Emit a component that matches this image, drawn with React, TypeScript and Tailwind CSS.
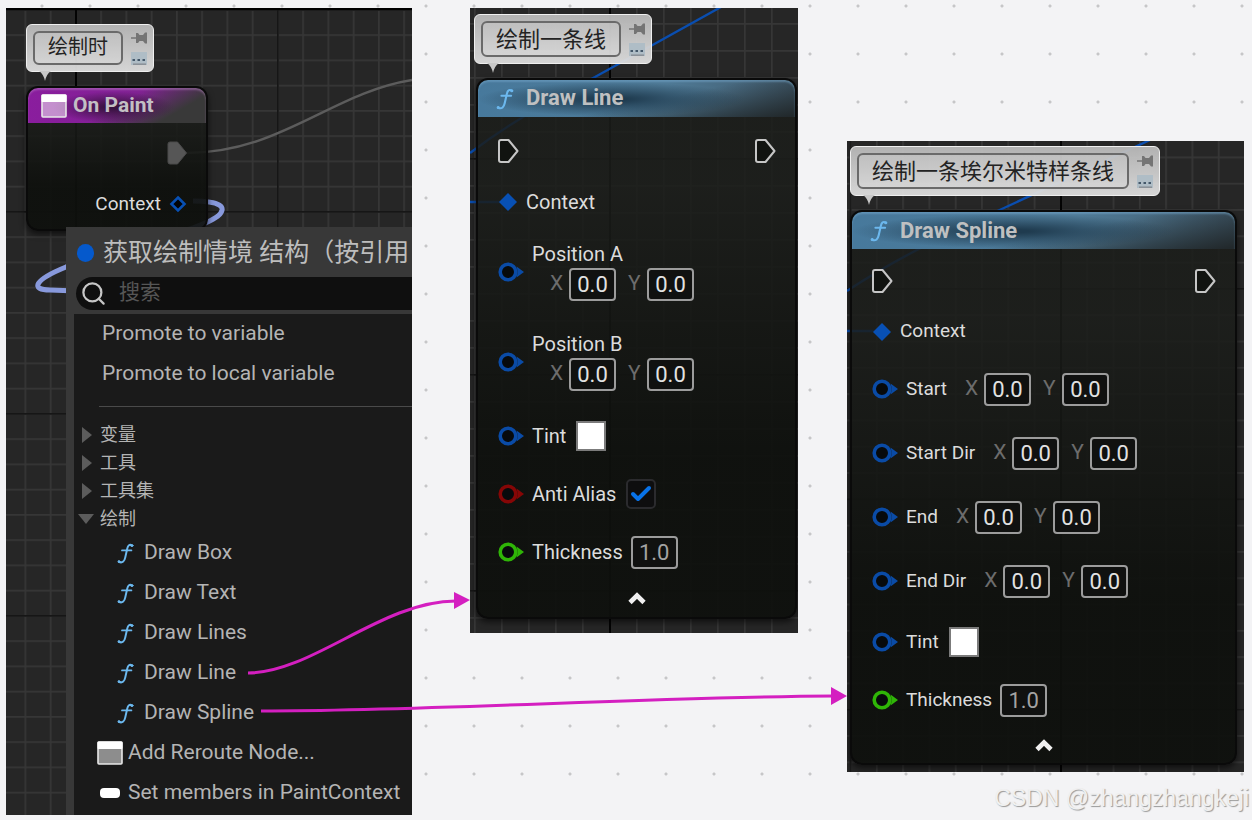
import { useState } from "react";
import type { ReactNode } from "react";
import { Check, ChevronUp, Search } from "lucide-react";
import clsx from "clsx";

interface GridPropsType {
  id: string;
  step: number;
  x: number;
  y: number;
}

const Grid = ({ id, step, x, y }: GridPropsType) => {
  const major = step * 8;

  return (
    <svg className="absolute inset-0 h-full w-full" aria-hidden="true">
      <defs>
        <pattern
          id={`${id}-minor`}
          width={step}
          height={step}
          x={x}
          y={y}
          patternUnits="userSpaceOnUse"
        >
          <path d={`M0 0.8H${step}M0.8 0V${step}`} stroke="#363636" strokeWidth="1.8" />
        </pattern>
        <pattern
          id={`${id}-major`}
          width={major}
          height={major}
          x={x}
          y={y}
          patternUnits="userSpaceOnUse"
        >
          <path d={`M0 0.8H${major}M0.8 0V${major}`} stroke="#161616" strokeWidth="1.8" />
        </pattern>
      </defs>
      <rect width="100%" height="100%" fill="#262626" />
      <rect width="100%" height="100%" fill={`url(#${id}-minor)`} />
      <rect width="100%" height="100%" fill={`url(#${id}-major)`} />
      <rect x={x} y="0" width="2" height="100%" fill="#030303" />
    </svg>
  );
};

const FunctionIcon = ({ className }: { className?: string }) => (
  <svg
    viewBox="0 0 17 21"
    className={clsx("shrink-0", className)}
    fill="none"
    stroke="#6cb8ee"
    strokeLinecap="round"
    aria-hidden="true"
  >
    <path
      d="M15 2.6C12.6 0.8 10.9 2.6 10.3 5.4L8.2 14.6C7.5 18 5.6 20.3 2.2 19"
      strokeWidth="2"
    />
    <path d="M5 7.4H14.4" strokeWidth="1.8" />
    <circle cx="15" cy="2.6" r="1" fill="#6cb8ee" strokeWidth="1" />
    <circle cx="2" cy="18.6" r="1" fill="#6cb8ee" strokeWidth="1" />
  </svg>
);

const WindowIcon = () => (
  <svg viewBox="0 0 26 24" className="h-6 w-[26px] shrink-0" aria-hidden="true">
    <rect x="1" y="1" width="24" height="22" rx="1" fill="#ffffff" fillOpacity="0.5" />
    <rect x="1" y="1" width="24" height="22" rx="1" fill="none" stroke="#e8e8e8" strokeWidth="1.6" />
    <rect x="0.5" y="0.5" width="25" height="7.5" rx="1" fill="#ffffff" />
  </svg>
);

const ExecPin = ({ filled }: { filled?: boolean }) => (
  <svg viewBox="0 0 22 26" className="h-[26px] w-[22px]" aria-hidden="true">
    <path
      d="M4 2H11.5L20.5 13L11.5 24H4Q2 24 2 22V4Q2 2 4 2Z"
      fill={filled ? "#565656" : "#111310"}
      stroke={filled ? "#4a4a4a" : "#c6c6c6"}
      strokeWidth={filled ? 1 : 2}
      strokeLinejoin="round"
    />
  </svg>
);

const DiamondPin = ({ filled }: { filled?: boolean }) => (
  <svg viewBox="0 0 18 18" className="h-[18px] w-[18px]" aria-hidden="true">
    <path
      d={filled ? "M9 0L18 9L9 18L0 9Z" : "M9 2.5L15.5 9L9 15.5L2.5 9Z"}
      fill={filled ? "#0850b4" : "#020408"}
      stroke="#0850b4"
      strokeWidth={filled ? 0 : 2.6}
    />
  </svg>
);

const DataPin = ({ color }: { color: string }) => (
  <svg viewBox="0 0 26 20" className="h-5 w-[26px] shrink-0" aria-hidden="true">
    <path d="M18.5 4.5L26 10L18.5 15.5Q20.5 10 18.5 4.5Z" fill={color} />
    <circle cx="10" cy="10" r="7.8" fill="#070a0c" stroke={color} strokeWidth="3.6" />
  </svg>
);

const CommentBubble = ({ text, large }: { text: string; large?: boolean }) => (
  <div className="relative mb-[14px] flex w-fit items-center gap-2 rounded-md border border-[#efefef] bg-linear-to-b from-[#b9b9b9]/95 to-[#dedede]/95 p-1.5">
    <input
      defaultValue={text}
      aria-label="Comment"
      className={clsx(
        "field-sizing-content rounded-md border-2 border-[#6a6a6a] bg-white/10 px-[13px] pb-[5px] text-[#232323] outline-none",
        large ? "h-9 text-[22px]" : "h-[34px] text-xl",
      )}
    />
    <div className="flex w-4 flex-col items-center gap-2">
      <button type="button" aria-label="Pin comment">
        <svg viewBox="0 0 16 12" className="h-3 w-4" fill="#747474">
          <path d="M0 5.2H5V1H7L8.5 3H12L14 0.5H16V11.5H14L12 9H8.5L7 11H5V6.8H0Z" />
        </svg>
      </button>
      <button type="button" aria-label="Toggle bubble">
        <svg viewBox="0 0 16 13" className="h-[13px] w-4">
          <rect width="16" height="13" fill="#afbdc6" />
          <path d="M1.5 7H4V9H1.5ZM6.5 7H9V9H6.5ZM11.5 7H14V9H11.5Z" fill="#44586a" />
          <path d="M2 12.2H15" stroke="#8b9299" strokeWidth="1.6" />
        </svg>
      </button>
    </div>
    <svg
      viewBox="0 0 12 10"
      className="absolute top-full left-3 h-2.5 w-3"
      aria-hidden="true"
    >
      <path d="M0 0H12Q7.5 3 6 10Q4.500 3 0 0Z" fill="#c8c8c8" />
    </svg>
  </div>
);

const NodeFrame = ({ className, children }: { className: string; children: ReactNode }) => (
  <section
    className={clsx(
      "relative rounded-xl border-2 border-[#0a0a0a] bg-linear-to-b from-[#1b1d1a]/85 from-20% to-[#0e100d]/93 to-70% shadow-[0_3px_6px_rgba(0,0,0,0.6)]",
      className,
    )}
  >
    {children}
  </section>
);

const FunctionHeader = ({ title }: { title: string }) => (
  <header className="flex h-[37px] items-center gap-3 rounded-t-[10px] bg-[radial-gradient(ellipse_42%_46%_at_42%_52%,#1f3b4f_10%,transparent),linear-gradient(168deg,transparent_55%,#22292c_98%),linear-gradient(to_right,#47799c,#4f7a96_60%,#40596a)] pl-[18px] shadow-[inset_0_2px_2px_rgba(120,170,205,0.5)]">
    <FunctionIcon className="h-[22px] w-[18px]" />
    <h2 className="text-[22px] font-bold text-[#bfc0c1]">{title}</h2>
  </header>
);

const NumberBox = ({ label, value, dim }: { label: string; value: string; dim?: boolean }) => (
  <input
    defaultValue={value}
    aria-label={label}
    inputMode="decimal"
    className={clsx(
      "h-[33px] w-[47px] rounded-[4px] border-2 border-[#9c9c9c] bg-[#101110] text-center text-[22px] outline-none",
      dim ? "text-[#a3a3a3]" : "text-[#e2e2e2]",
    )}
  />
);

const VectorInput = ({ name }: { name: string }) => (
  <div className="flex items-center pl-[18px] text-[21px] text-[#6c6c6c]">
    <span className="w-[19px]">X</span>
    <NumberBox label={`${name} X`} value="0.0" />
    <span className="ml-3 w-[19px]">Y</span>
    <NumberBox label={`${name} Y`} value="0.0" />
  </div>
);

const ExecRow = () => (
  <div className="flex h-[51px] items-center justify-between px-[19px]">
    <ExecPin />
    <ExecPin />
  </div>
);

const ContextRow = () => (
  <div className="flex h-[51px] items-center gap-[9px] pl-[21px]">
    <DiamondPin filled />
    <span>Context</span>
  </div>
);

interface PinRowPropsType {
  color?: string;
  className?: string;
  children: ReactNode;
}

const PinRow = ({ color = "#0a4ba6", className = "h-[58px]", children }: PinRowPropsType) => (
  <div className={clsx("flex items-center gap-2 pl-5", className)}>
    <DataPin color={color} />
    {children}
  </div>
);

const TintRow = () => (
  <PinRow>
    <span>Tint</span>
    <button
      type="button"
      aria-label="Tint colour"
      className="ml-0.5 h-[30px] w-[30px] border-2 border-[#7b7b7b] bg-white"
    />
  </PinRow>
);

const ThicknessRow = () => (
  <PinRow color="#2fb507">
    <span>Thickness</span>
    <NumberBox label="Thickness" value="1.0" dim />
  </PinRow>
);

const CollapseButton = ({ className }: { className: string }) => (
  <button
    type="button"
    aria-label="Collapse node"
    className={clsx("flex w-full items-center justify-center text-[#f0f0f0]", className)}
  >
    <ChevronUp size={28} strokeWidth={4} strokeLinecap="butt" strokeLinejoin="miter" />
  </button>
);

const OnPaintNode = () => (
  <NodeFrame className="ml-5 w-[182px] pb-1 text-[19px]">
    <header className="flex h-[35px] items-center gap-1.5 rounded-t-[10px] bg-[radial-gradient(ellipse_34%_45%_at_48%_55%,#38133f_10%,transparent),linear-gradient(150deg,transparent_50%,#393939_80%),linear-gradient(to_right,#8a1d9e,#7b258c)] pl-[13px] shadow-[inset_0_2px_2px_rgba(200,150,210,0.4)]">
      <WindowIcon />
      <h2 className="text-[21px] font-bold text-[#c3bfc4]">On Paint</h2>
    </header>
    <div className="flex h-[60px] items-center justify-end pr-[18px]">
      <ExecPin filled />
    </div>
    <div className="flex h-[42px] items-center justify-end gap-2 pr-[19px] text-[#dcdcdc]">
      <span>Context</span>
      <DiamondPin />
    </div>
  </NodeFrame>
);

const categories = [
  { name: "变量", open: false },
  { name: "工具", open: false },
  { name: "工具集", open: false },
  { name: "绘制", open: true },
];

const drawFunctions = ["Draw Box", "Draw Text", "Draw Lines", "Draw Line", "Draw Spline"];

const ActionMenu = () => {
  const [search, setSearch] = useState("");

  return (
    <div className="relative -mt-1 ml-[60px] flex-1 bg-[#383838] text-[21px] text-[#b4b4b4]">
      <h2 className="flex h-[50px] items-center gap-[9px] overflow-hidden pt-0.5 pl-[11px] text-[25px] whitespace-nowrap text-[#bdbdbd]">
        <span className="h-[18px] w-[17px] shrink-0 rounded-full bg-[#0559cc]" />
        获取绘制情境 结构（按引用
      </h2>
      <label className="ml-2.5 flex h-[33px] items-center gap-3 rounded-l-full bg-[#0f0f0f] pl-1">
        <Search size={27} strokeWidth={2} className="shrink-0 text-[#c6c6c6]" />
        <input
          value={search}
          onChange={(e) => setSearch(e.target.value)}
          placeholder="搜索"
          aria-label="搜索"
          className="w-full min-w-0 bg-transparent pb-0.5 outline-none placeholder:text-[#565656]"
        />
      </label>
      <div className="mt-1 ml-2 bg-[#1a1a1a] pb-0.5">
        <button type="button" className="flex h-10 w-full items-center pl-[28px]">
          Promote to variable
        </button>
        <button type="button" className="flex h-10 w-full items-center pl-[28px]">
          Promote to local variable
        </button>
        <hr className="mt-3 mb-[14px] ml-[25px] border-[#4a4a4a]" />
        {categories.map((category) => (
          <button
            key={category.name}
            type="button"
            aria-expanded={category.open}
            className="flex h-7 w-full items-center gap-1.5 pl-1 text-lg"
          >
            <svg viewBox="0 0 16 16" className="h-4 w-4" fill="#5c5c5c">
              <path d={category.open ? "M0 3H16L8 13Z" : "M4 0L14 8L4 16Z"} />
            </svg>
            {category.name}
          </button>
        ))}
        {drawFunctions.map((name) => (
          <button
            key={name}
            type="button"
            className="flex h-10 w-full items-center gap-2.5 pl-[43px]"
          >
            <FunctionIcon className="h-[21px] w-[17px]" />
            {name}
          </button>
        ))}
        <button type="button" className="flex h-10 w-full items-center gap-[5px] pl-[23px]">
          <WindowIcon />
          Add Reroute Node...
        </button>
        <button type="button" className="flex h-10 w-full items-center gap-2 pl-[26px]">
          <span className="h-2.5 w-5 rounded-[4px] bg-white" />
          Set members in PaintContext
        </button>
      </div>
    </div>
  );
};

const DrawLineNode = () => {
  const [antiAlias, setAntiAlias] = useState(true);

  return (
    <NodeFrame className="ml-1.5 w-[321px] text-xl text-[#dcdcdc]">
      <FunctionHeader title="Draw Line" />
      <div className="pt-2">
        <ExecRow />
        <ContextRow />
        {["Position A", "Position B"].map((name) => (
          <PinRow key={name} className="h-[90px]">
            <div className="pb-1">
              <div className="leading-7">{name}</div>
              <VectorInput name={name} />
            </div>
          </PinRow>
        ))}
        <TintRow />
        <PinRow color="#850606">
          <label htmlFor="anti-alias">Anti Alias</label>
          <span className="relative ml-0.5 h-[30px] w-[30px]">
            <input
              id="anti-alias"
              type="checkbox"
              checked={antiAlias}
              onChange={(e) => setAntiAlias(e.target.checked)}
              className="block h-full w-full appearance-none rounded-[5px] border-2 border-[#2b2b2e] bg-[#0e0e0f]"
            />
            {antiAlias && (
              <Check
                size={24}
                strokeWidth={4}
                className="pointer-events-none absolute inset-0 m-auto text-[#0872e8]"
              />
            )}
          </span>
        </PinRow>
        <ThicknessRow />
        <CollapseButton className="h-9" />
      </div>
    </NodeFrame>
  );
};

const DrawSplineNode = () => (
  <NodeFrame className="ml-[3px] w-[387px] text-[19px] text-[#dcdcdc]">
    <FunctionHeader title="Draw Spline" />
    <div className="pt-1.5">
      <ExecRow />
      <ContextRow />
      {["Start", "Start Dir", "End", "End Dir"].map((name) => (
        <PinRow key={name} className="h-16">
          <div className="flex items-center">
            <span>{name}</span>
            <VectorInput name={name} />
          </div>
        </PinRow>
      ))}
      <TintRow />
      <ThicknessRow />
      <CollapseButton className="h-[34px]" />
    </div>
  </NodeFrame>
);

const App = () => {
  return (
    <main className="relative flex min-h-screen w-full items-start bg-[#f3f3f5] bg-[radial-gradient(circle,#c6c6c8_1px,transparent_2px)] bg-size-[48px_48px] bg-position-[18px_30px] pt-2 pl-1.5 font-[Roboto,'Noto_Sans_CJK_SC',sans-serif]">
      <div className="relative flex w-[406px] shrink-0 flex-col overflow-hidden border-t-2 border-black pt-[14px]">
        <Grid id="event" step={25.25} x={69} y={-1} />
        <svg className="absolute inset-0 h-full w-full" fill="none" aria-hidden="true">
          <path d="M180 143C275 143 325 83 406 70" stroke="#5c5c5c" strokeWidth="2.4" />
          <path
            d="M187 191C214 191 222 197 212 206C194 220 130 234 60 257C28 270 24 280 44 280L70 281"
            stroke="#8899dc"
            strokeWidth="5"
          />
        </svg>
        <div className="ml-5">
          <CommentBubble text="绘制时" />
        </div>
        <OnPaintNode />
        <ActionMenu />
      </div>

      <div className="relative ml-[58px] w-[328px] shrink-0 overflow-hidden pt-[6px] pb-[14px]">
        <Grid id="line" step={27} x={139} y={150} />
        <svg className="absolute inset-0 h-full w-full" fill="none" aria-hidden="true">
          <path d="M0 145Q50 107 125 69L251 -1M0 194H30" stroke="#0a4eb0" strokeWidth="2.4" />
        </svg>
        <div className="ml-1">
          <CommentBubble text="绘制一条线" large />
        </div>
        <DrawLineNode />
      </div>

      <div className="mt-[133px] ml-[49px] flex flex-1 flex-col">
        <div className="relative w-[397px] overflow-hidden pt-[5px] pb-[7px]">
          <Grid id="spline" step={26.3} x={213} y={147} />
          <svg className="absolute inset-0 h-full w-full" fill="none" aria-hidden="true">
            <path d="M0 150Q60 110 157 67L303 -1M0 190H30" stroke="#0a4eb0" strokeWidth="2.4" />
          </svg>
          <div className="ml-[3px]">
            <CommentBubble text="绘制一条埃尔米特样条线" large />
          </div>
          <DrawSplineNode />
        </div>
        <p className="mt-3 self-end pr-[3px] font-['Liberation_Sans',sans-serif] text-[23px] leading-7 whitespace-nowrap text-[#f0f0f0] [text-shadow:1px_1px_1px_#989898]">
          CSDN @zhangzhangkeji
        </p>
      </div>

      <svg
        className="pointer-events-none absolute inset-0 h-full w-full"
        fill="none"
        stroke="#d41fc0"
        strokeWidth="3"
        aria-hidden="true"
      >
        <path d="M248 673C312 673 382 601 456 601" />
        <path d="M261 711C440 711 640 697 834 696" />
        <path d="M454 592L470 600L454 609ZM831 687L847 696L831 705Z" fill="#d41fc0" stroke="none" />
      </svg>
    </main>
  );
};

export default App;
